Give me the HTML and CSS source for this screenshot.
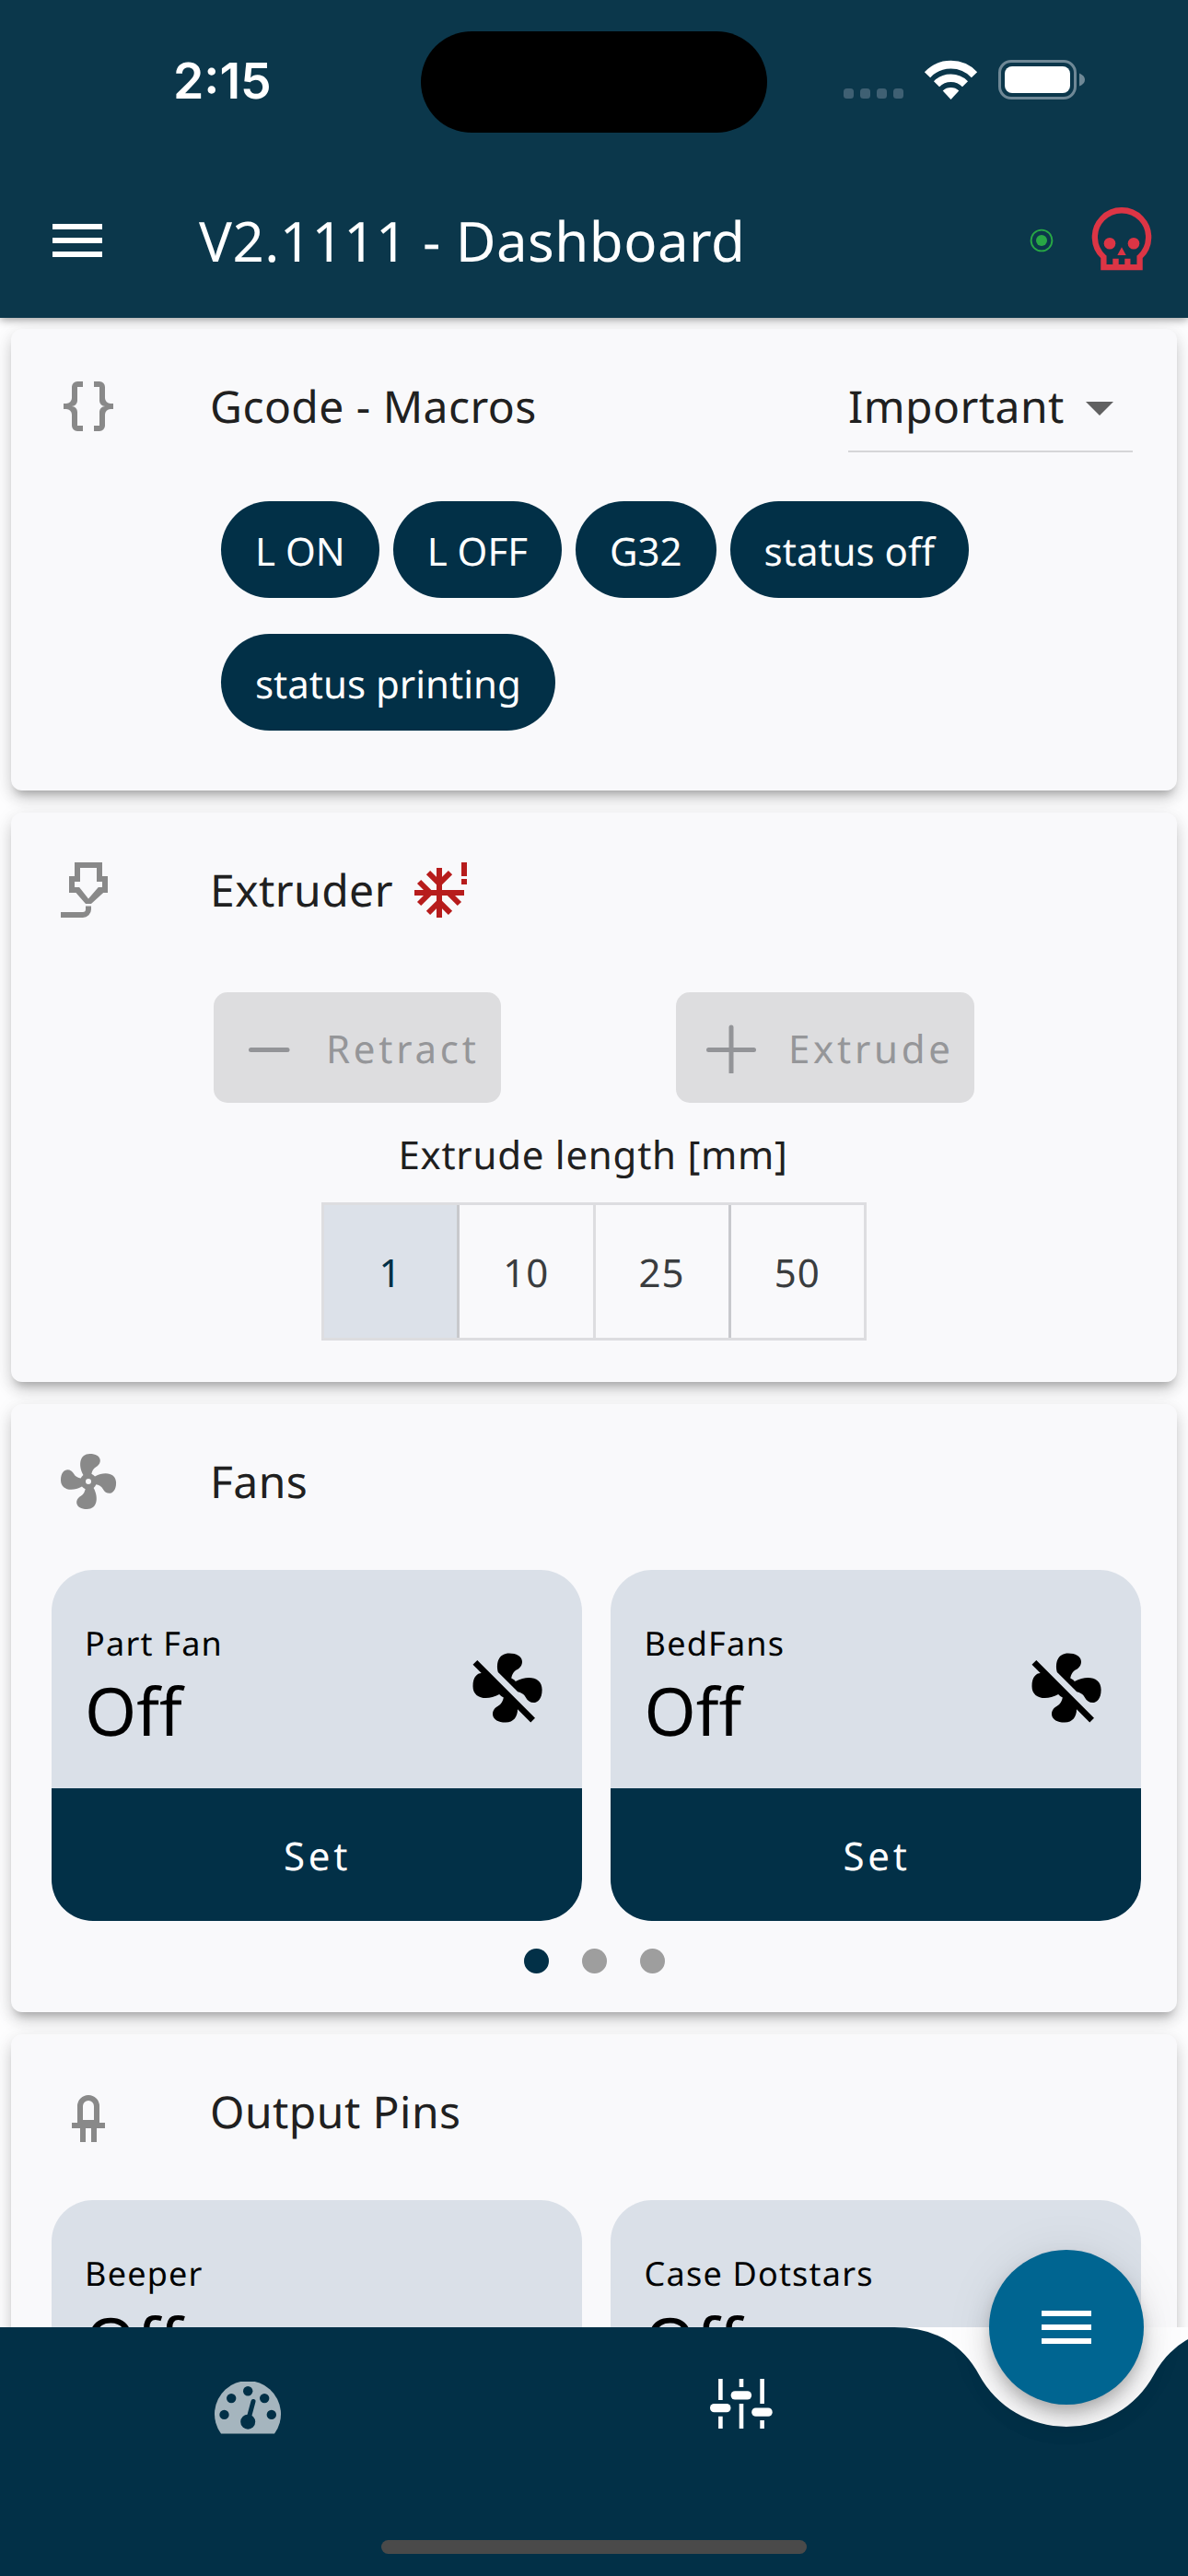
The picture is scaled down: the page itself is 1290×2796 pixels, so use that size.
FILE: index.html
```html
<!DOCTYPE html>
<html lang="en">
<head>
<meta charset="utf-8">
<title>V2.1111 - Dashboard</title>
<link rel="stylesheet" href="styles.css">
</head>
<body>
<svg class="defs" aria-hidden="true">
  <symbol id="menu" viewBox="0 0 24 24"><path d="M3 18h18v-2H3v2zm0-5h18v-2H3v2zm0-7v2h18V6H3z"/></symbol>
  <symbol id="braces" viewBox="0 0 24 24"><path d="M8,3A2,2 0 0,0 6,5V9A2,2 0 0,1 4,11H3V13H4A2,2 0 0,1 6,15V19A2,2 0 0,0 8,21H10V19H8V14A2,2 0 0,0 6,12A2,2 0 0,0 8,10V5H10V3M16,3A2,2 0 0,1 18,5V9A2,2 0 0,0 20,11H21V13H20A2,2 0 0,0 18,15V19A2,2 0 0,1 16,21H14V19H16V14A2,2 0 0,1 18,12A2,2 0 0,1 16,10V5H14V3H16Z"/></symbol>
  <symbol id="nozzle" viewBox="0 0 24 24"><path fill-rule="evenodd" d="M7 2H17V7H19V13H17.4L13 17H11L7.5 13H5V7H7ZM9 4V9H7V11H8.7L12 15.2L15.6 11H17V9H15V4Z"/><path d="M11 17.8H13V19A3 3 0 0 1 10 22H2V20H10A1 1 0 0 0 11 19Z"/></symbol>
  <symbol id="cold" viewBox="0 0 24 24"><path fill="none" stroke="currentColor" stroke-width="2" d="M10 4V22M1 13H19M6 5.7L10 9.7L14 5.7M6 20.3L10 16.3L14 20.3M2.7 9L6.7 13L2.7 17M13.3 13L17.3 17"/><path d="M18 2H20V7H18ZM18 8H20V10H18Z"/></symbol>
  <symbol id="fan" viewBox="0 0 24 24"><path d="M12,11A1,1 0 0,0 11,12A1,1 0 0,0 12,13A1,1 0 0,0 13,12A1,1 0 0,0 12,11M12.5,2C17,2 17.11,5.57 14.75,6.75C13.76,7.24 13.32,8.29 13.13,9.22C13.61,9.42 14.03,9.73 14.35,10.13C18.05,8.13 22.03,8.92 22.03,12.5C22.03,17 18.46,17.1 17.28,14.73C16.78,13.74 15.72,13.3 14.79,13.11C14.59,13.59 14.28,14 13.88,14.34C15.87,18.03 15.08,22 11.5,22C7,22 6.91,18.42 9.27,17.24C10.25,16.75 10.69,15.71 10.89,14.79C10.4,14.59 9.97,14.27 9.65,13.87C5.96,15.85 2,15.07 2,11.5C2,7 5.56,6.89 6.74,9.26C7.24,10.25 8.29,10.68 9.22,10.87C9.41,10.39 9.73,9.97 10.14,9.65C8.15,5.96 8.94,2 12.5,2Z"/></symbol>
  <symbol id="fan-off" viewBox="0 0 24 24"><path d="M12.5,2C9.64,2 8.57,4.55 9.29,7.47L15,13.16C15.87,13.37 16.81,13.81 17.28,14.73C18.46,17.1 22.03,17 22.03,12.5C22.03,8.92 18.05,8.13 14.35,10.13C14.03,9.73 13.61,9.42 13.13,9.22C13.32,8.29 13.76,7.24 14.75,6.75C17.11,5.57 17,2 12.5,2M3.28,4L2,5.27L4.47,7.73C3.22,7.74 2,8.87 2,11.5C2,15.07 5.96,15.85 9.65,13.87C9.97,14.27 10.4,14.59 10.89,14.79C10.69,15.71 10.25,16.75 9.27,17.24C6.91,18.42 7,22 11.5,22C13.8,22 14.94,20.36 14.94,18.21L18.73,22L20,20.72L3.28,4Z"/></symbol>
  <symbol id="led" viewBox="0 0 24 24"><path fill-rule="evenodd" d="M12 6A4 4 0 0 0 8 10V16H6V18H9V23H11V18H13V23H15V18H18V16H16V10A4 4 0 0 0 12 6ZM12 8A2 2 0 0 1 14 10V15H10V10A2 2 0 0 1 12 8Z"/></symbol>
</svg>

<header class="app-header">
  <div class="status">
    <span class="clock">2:15</span>
    <span class="island"></span>
    <svg class="status-icons" viewBox="0 0 264 44">
      <g fill="#3f6073"><rect x="0" y="31" width="11" height="11" rx="3.5"/><rect x="18" y="31" width="11" height="11" rx="3.5"/><rect x="36" y="31" width="11" height="11" rx="3.5"/><rect x="54" y="31" width="11" height="11" rx="3.5"/></g>
      <g fill="none" stroke="#fff" stroke-width="8.6">
        <path d="M91 16.200A35 35 0 0 1 142 16.200"/>
        <path d="M101 26.200A22 22 0 0 1 132 26.200"/>
      </g>
      <path fill="#fff" d="M116.500 43L107.700 33.500A13 13 0 0 1 125.300 33.500Z"/>
      <rect x="169.500" y="1.500" width="82" height="40" rx="12.500" fill="none" stroke="#6f8896" stroke-width="3"/>
      <rect x="175" y="7" width="71" height="29" rx="8" fill="#fff"/>
      <path fill="#6f8896" d="M256 14.500Q262 17 262 21.500Q262 26 256 28.500Z"/>
    </svg>
  </div>
  <div class="toolbar">
    <svg class="icon"><use href="#menu"/></svg>
    <h1>V2.1111 - Dashboard</h1>
    <svg class="toolbar-actions" viewBox="0 0 180 100">
      <circle cx="41" cy="51" r="11.400" fill="none" stroke="#28a745" stroke-width="1.900"/>
      <circle cx="41" cy="51" r="6" fill="#28a745"/>
      <path fill="none" stroke="#dc3545" stroke-width="6.300" d="M108.400 69A29.150 29.150 0 1 1 147.600 69V80.200H108.400Z"/>
      <path fill="#dc3545" d="M118.300 70.700H124.700V78H118.300ZM131.300 70.700H137.500V78H131.300ZM128 58.300L132.700 67H123.300Z"/>
      <circle cx="115" cy="54.300" r="6.300" fill="#dc3545"/><circle cx="141" cy="54.300" r="6.300" fill="#dc3545"/>
    </svg>
  </div>
</header>

<main>
  <section class="card macros">
    <div class="tile">
      <svg class="icon"><use href="#braces"/></svg>
      <h2>Gcode - Macros</h2>
      <div class="dropdown"><span>Important</span><i class="caret"></i></div>
    </div>
    <div class="chips">
      <button class="chip">L ON</button><button class="chip">L OFF</button><button class="chip">G32</button><button class="chip">status off</button><button class="chip">status printing</button>
    </div>
  </section>

  <section class="card extruder">
    <div class="tile">
      <svg class="icon"><use href="#nozzle"/></svg>
      <h2>Extruder</h2>
      <svg class="icon cold"><use href="#cold"/></svg>
    </div>
    <div class="buttons">
      <button class="btn retract"><svg class="glyph" viewBox="0 0 54 54"><path d="M7.500 28.500H47"/></svg>Retract</button>
      <button class="btn extrude"><svg class="glyph" viewBox="0 0 54 54"><path d="M2.500 28.500H51.500M27 4V53"/></svg>Extrude</button>
    </div>
    <p class="length">Extrude length [mm]</p>
    <div class="toggle"><span class="on">1</span><span>10</span><span>25</span><span>50</span></div>
  </section>

  <section class="card fans">
    <div class="tile">
      <svg class="icon"><use href="#fan"/></svg>
      <h2>Fans</h2>
    </div>
    <div class="grid">
      <article class="unit">
        <div class="info"><div><small>Part Fan</small><strong>Off</strong></div><svg class="big"><use href="#fan-off"/></svg></div>
        <button class="set">Set</button>
      </article>
      <article class="unit">
        <div class="info"><div><small>BedFans</small><strong>Off</strong></div><svg class="big"><use href="#fan-off"/></svg></div>
        <button class="set">Set</button>
      </article>
    </div>
    <div class="dots"><i class="on"></i><i></i><i></i></div>
  </section>

  <section class="card pins">
    <div class="tile">
      <svg class="icon"><use href="#led"/></svg>
      <h2>Output Pins</h2>
    </div>
    <div class="grid">
      <article class="unit"><div class="info"><div><small>Beeper</small><strong>Off</strong></div></div></article>
      <article class="unit"><div class="info"><div><small>Case Dotstars</small><strong>Off</strong></div></div></article>
    </div>
  </section>
</main>

<nav class="bottom">
  <svg class="bar" viewBox="0 0 1290 270"><path d="M0 0H971Q1035 0 1063.200 51.700A108 108 0 0 0 1252.800 51.700Q1281 0 1345 0V270H0Z"/></svg>
  <div class="tabs">
    <svg class="gauge" viewBox="0 0 72 57">
      <path fill="#a5b5be" fill-rule="evenodd" d="M7 56.500A36 36 0 1 1 65 56.500Z"/>
      <g fill="#023047"><circle cx="36.200" cy="10.200" r="5.200"/><circle cx="18.200" cy="18.100" r="5.200"/><circle cx="54.200" cy="18.100" r="5.200"/><circle cx="10.500" cy="35.900" r="5.200"/><circle cx="61.800" cy="35.900" r="5.200"/><circle cx="36.200" cy="43.700" r="8"/></g>
      <path stroke="#023047" stroke-width="5" stroke-linecap="round" d="M36.500 42L42 21.500"/>
    </svg>
    <svg class="sliders" viewBox="0 0 68 54">
      <path stroke="#fff" stroke-width="4.600" d="M11.400 0V23M11.400 40.700V54M34 0V9M34 27V54M56.600 0V27M56.600 45V54"/>
      <g fill="#fff"><rect x="0" y="27" width="22.500" height="9.200" rx="4.500"/><rect x="22.600" y="13.300" width="22.500" height="9.200" rx="4.500"/><rect x="45.200" y="31.500" width="22.500" height="9.200" rx="4.500"/></g>
    </svg>
  </div>
  <button class="fab"><svg class="icon"><use href="#menu"/></svg></button>
  <span class="home"></span>
</nav>
</body>
</html>
```
FILE: styles.css
```css
* { box-sizing: border-box; margin: 0; padding: 0; }
body {
  width: 1290px;
  height: 2796px;
  overflow: hidden;
  display: flex;
  flex-direction: column;
  background: #fdfdfe;
  color: #202020;
  font-family: "Noto Sans", sans-serif;
  text-rendering: geometricPrecision;
}
button { border: 0; font: inherit; text-rendering: inherit; }
svg { display: block; flex: none; }
.defs { position: absolute; width: 0; height: 0; }
.icon { width: 72px; height: 72px; fill: currentColor; }

/* Header */
.app-header {
  position: relative;
  z-index: 1;
  flex: none;
  height: 345px;
  background: #0b374b;
  color: #fff;
  box-shadow: 0 2px 9px rgba(0, 0, 0, .4);
}
.status { display: flex; height: 177px; }
.clock {
  width: 457px;
  padding-left: 188px;
  font: 600 53.5px/175px "Inter", sans-serif;
}
.island { width: 376px; height: 110px; margin-top: 34px; border-radius: 55px; background: #000; }
.status-icons { width: 264px; height: 44px; margin: 65px 0 0 83px; }
.toolbar { display: flex; align-items: center; height: 168px; padding-left: 48px; }
.toolbar h1 {
  flex: 1;
  margin-left: 96px;
  font-size: 60px;
  font-weight: 400;
  letter-spacing: .45px;
  line-height: 84px;
}
.toolbar-actions { width: 180px; height: 100px; margin-right: 20px; align-self: flex-start; margin-top: 33px; }

/* Cards */
main { flex: none; height: 2181px; overflow: hidden; }
.card {
  margin: 12px 12px 24px;
  border-radius: 12px;
  background: #f9f9fb;
  box-shadow: 0 9px 9px -6px rgba(0, 0, 0, .2), 0 9px 16px rgba(0, 0, 0, .17), 0 3px 24px rgba(0, 0, 0, .06);
}
.macros { height: 501px; }
.extruder { height: 618px; }
.fans { height: 660px; }
.pins { height: 660px; }
.tile { display: flex; align-items: center; height: 168px; padding: 0 48px; }
.tile .icon { color: #898989; }
.tile h2 { margin: 2px 0 0 96px; font-size: 48px; font-weight: 400; letter-spacing: .45px; line-height: 66px; }
.tile .cold { margin-left: 20px; color: #b71c1c; }

/* Macros */
.dropdown {
  display: flex;
  justify-content: space-between;
  align-items: center;
  width: 309px;
  height: 100px;
  margin: 0 0 0 auto;
  padding: 2px 21px 0 0;
  border-bottom: 2px solid #d6d6d8;
  font-size: 48px;
  letter-spacing: .45px;
}
.caret { margin-top: 4px; border: 15px solid transparent; border-top-color: #616161; border-bottom: 0; }
.chips { display: flex; flex-wrap: wrap; gap: 39px 15px; padding: 19px 100px 0 228px; }
.chip {
  height: 105px;
  padding: 3px 37px 0;
  border-radius: 53px;
  background: #023047;
  color: #fff;
  font-size: 42px;
}

/* Extruder */
.buttons { display: flex; justify-content: space-between; padding: 27px 220px 0; }
.btn {
  display: flex;
  align-items: center;
  height: 120px;
  padding: 2px 0 0 33px;
  border-radius: 15px;
  background: #dddddf;
  color: #959699;
  font-size: 42px;
  letter-spacing: 3.75px;
}
.glyph { width: 54px; height: 54px; margin-right: 35px; stroke: #939498; stroke-width: 5; stroke-linecap: round; }
.retract { width: 312px; }
.extrude { width: 324px; }
.length { margin-top: 27px; padding-right: 2px; font-size: 42px; letter-spacing: .75px; line-height: 60px; text-align: center; }
.toggle { display: flex; width: 592px; height: 150px; margin: 21px 0 0 337px; border: 3px solid #dddde0; }
.toggle span {
  flex: 1;
  border-left: 3px solid #dddde0;
  color: #3a3d3f;
  font-size: 42px;
  letter-spacing: 1.2px;
  line-height: 147px;
  text-align: center;
}
.toggle span.on { border: 0; background: #dce1e9; color: #023047; }
.toggle span:nth-child(even) { border-left-color: #c8c9cd; }

/* Fan and pin units */
.grid { display: grid; grid-template-columns: 576px 576px; gap: 31.500px; padding: 12px 0 0 43.500px; }
.unit { height: 381px; overflow: hidden; border-radius: 45px; background: #dae0e8; color: #000; }
.info { display: flex; align-items: center; justify-content: space-between; height: 237px; padding: 18px 36px 0 36.600px; }
.info > div { padding-top: 2px; }
.info small { display: block; font-size: 36px; letter-spacing: 1.2px; line-height: 49px; }
.info strong { display: block; font-size: 72px; font-weight: 400; line-height: 98px; }
.big { width: 90px; height: 90px; }
.set { width: 100%; height: 144px; padding: 2px 0 0 2px; background: #023047; color: #fff; font-size: 42px; letter-spacing: 3.75px; }
.dots { display: flex; justify-content: center; gap: 36px; padding-top: 30px; }
.dots i { width: 27px; height: 27px; border-radius: 50%; background: #9e9e9e; }
.dots .on { background: #023047; }

/* Bottom navigation */
.bottom { position: relative; flex: none; height: 270px; }
.bar { position: absolute; inset: 0; width: 1290px; height: 270px; fill: #023047; }
.fab {
  position: absolute;
  left: 1074px;
  top: -84px;
  display: grid;
  place-items: center;
  width: 168px;
  height: 168px;
  border-radius: 50%;
  background: #006591;
  color: #fff;
  box-shadow: 0 9px 15px -3px rgba(0, 0, 0, .2), 0 18px 30px rgba(0, 0, 0, .14), 0 3px 54px rgba(0, 0, 0, .08);
}
.tabs { position: relative; display: flex; padding: 56px 0 0 233px; }
.gauge { width: 72px; height: 57px; margin-top: 3px; }
.sliders { width: 68px; height: 54px; margin-left: 466px; }
.home { position: absolute; left: 414px; bottom: 24px; width: 462px; height: 15px; border-radius: 8px; background: #4a4a4a; }
```
